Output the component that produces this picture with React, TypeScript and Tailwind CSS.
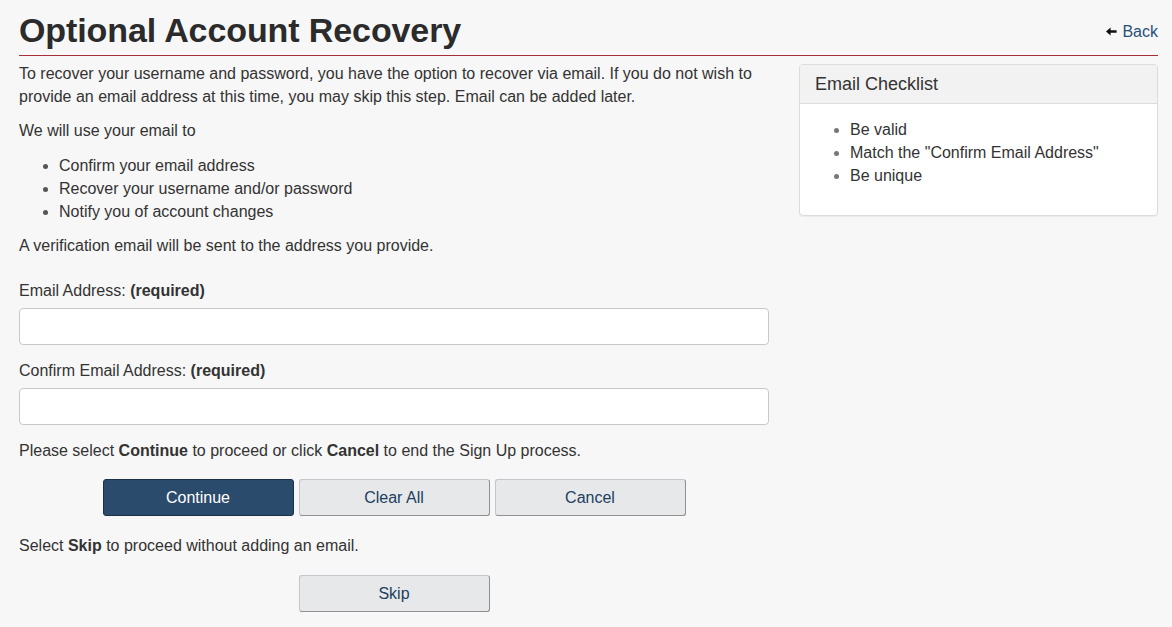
const emailRules = ['Be valid', 'Match the "Confirm Email Address"', 'Be unique']

const uses = [
  'Confirm your email address',
  'Recover your username and/or password',
  'Notify you of account changes',
]

function BackArrow() {
  return (
    <svg width="11" height="9" viewBox="0 0 11 9" className="mr-[5px]" aria-hidden>
      <path d="M0 4.5 L4.6 0.6 L4.6 3.3 L10.6 3.3 L10.6 5.7 L4.6 5.7 L4.6 8.4 Z" fill="#111" />
    </svg>
  )
}

function GreyButton({ label }: { label: string }) {
  return (
    <button
      type="button"
      className="h-[37px] w-[191px] rounded-[3px] border border-[#c4c6c9] border-b-[#8d8f92] border-r-[#8d8f92] bg-[#e7e8ea] text-[16px] text-[#203f5f]"
    >
      {label}
    </button>
  )
}

export default function App() {
  return (
    <main
      className="min-h-screen bg-[#f7f7f7] pl-[19px] pr-[14px] text-[16px] leading-[23px] text-[#333]"
      style={{ fontFamily: '"Liberation Sans", Arial, sans-serif' }}
    >
      <header className="flex items-center justify-between border-b border-[#a5303c] pb-[5px] pt-[10px]">
        <h1 className="text-[34px] font-bold leading-[40px] tracking-[-0.1px] text-[#2b2b2b]">
          Optional Account Recovery
        </h1>
        <a href="#" className="mt-[3px] flex items-center text-[#27507a]">
          <BackArrow />
          Back
        </a>
      </header>

      <div className="flex gap-[30px] pt-[6px]">
        <section className="w-[750px] shrink-0">
          <p className="mb-[11px]">
            To recover your username and password, you have the option to recover via email. If you do not wish to
            provide an email address at this time, you may skip this step. Email can be added later.
          </p>
          <p className="mb-[12px]">We will use your email to</p>
          <ul className="mb-[11px] list-disc pl-[40px] marker:text-[#555]">
            {uses.map((u) => (
              <li key={u}>{u}</li>
            ))}
          </ul>
          <p>A verification email will be sent to the address you provide.</p>

          <label className="mt-[22px] block">
            Email Address: <b>(required)</b>
          </label>
          <input
            type="email"
            className="mt-[6px] block h-[37px] w-full rounded-[4px] border border-[#c9c9c9] bg-white px-3"
          />

          <label className="mt-[14px] block">
            Confirm Email Address: <b>(required)</b>
          </label>
          <input
            type="email"
            className="mt-[6px] block h-[37px] w-full rounded-[4px] border border-[#c9c9c9] bg-white px-3"
          />

          <p className="mt-[14px]">
            Please select <b>Continue</b> to proceed or click <b>Cancel</b> to end the Sign Up process.
          </p>

          <div className="mt-[17px] flex justify-center gap-[5px]">
            <button
              type="button"
              className="h-[37px] w-[191px] rounded-[3px] border border-[#1b3149] bg-[#2b4b6c] text-[16px] text-white"
            >
              Continue
            </button>
            <GreyButton label="Clear All" />
            <GreyButton label="Cancel" />
          </div>

          <p className="mt-[18px]">
            Select <b>Skip</b> to proceed without adding an email.
          </p>
          <div className="mt-[18px] flex justify-center">
            <GreyButton label="Skip" />
          </div>
        </section>

        <aside className="mt-[2px] h-[152px] flex-1 overflow-hidden rounded-[4px] border border-[#dcdcdc] bg-white shadow-[0_1px_1px_rgba(0,0,0,0.05)]">
          <div className="h-[39px] border-b border-[#dcdcdc] bg-[#f2f2f2] px-[15px] pt-[8px] text-[18px] leading-[23px] text-[#333]">
            Email Checklist
          </div>
          <ul className="list-disc pl-[50px] pt-[14px] marker:text-[#777]">
            {emailRules.map((r) => (
              <li key={r}>{r}</li>
            ))}
          </ul>
        </aside>
      </div>
    </main>
  )
}
